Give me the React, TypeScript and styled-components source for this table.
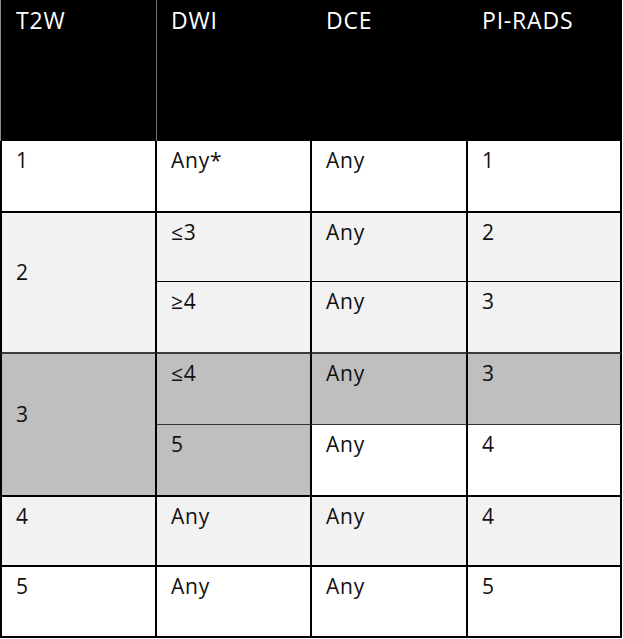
import styled, { createGlobalStyle } from 'styled-components';

const GlobalStyle = createGlobalStyle`
    html, body {
        margin: 0;
        padding: 0;
        background: #ffffff;
    }
`;

type RowProps = {
    $h: number;
};

type CellProps = {
    $bg?: string;
    $first?: boolean;
    $bottom?: string;
    $middle?: boolean;
};

type HeadCellProps = {
    $first?: boolean;
    $w: number;
};

const Table = styled.table`
    width: 622px;
    table-layout: fixed;
    border-collapse: separate;
    border-spacing: 0;
    font-family: "Open Sans", "Liberation Sans", sans-serif;
    color: #111111;
`;

const Row = styled.tr<RowProps>`
    height: ${(props) => props.$h}px;
`;

const HeadCell = styled.th<HeadCellProps>`
    box-sizing: border-box;
    width: ${(props) => props.$w}px;
    background: #000000;
    color: #ffffff;
    font-weight: 400;
    font-size: 23px;
    letter-spacing: 0.8px;
    line-height: normal;
    text-align: left;
    vertical-align: top;
    padding: 4px 0 0 ${(props) => (props.$first ? 15 : 14)}px;
    border-left: ${(props) => (props.$first ? '1px solid #8a8a8a' : 'none')};
    border-right: ${(props) => (props.$first ? '1px solid #6e6e6e' : 'none')};
`;

const Cell = styled.td<CellProps>`
    box-sizing: border-box;
    background: ${(props) => props.$bg || '#ffffff'};
    font-size: 21px;
    letter-spacing: 0.8px;
    line-height: normal;
    text-align: left;
    vertical-align: ${(props) => (props.$middle ? 'middle' : 'top')};
    padding: ${(props) => (props.$middle ? '0 0 22px 14px' : '5px 0 0 14px')};
    border-left: ${(props) => (props.$first ? '2px solid #000' : 'none')};
    border-right: 2px solid #000;
    border-bottom: ${(props) => props.$bottom || '2px solid #000'};
`;

const LIGHT = '#f2f2f2';
const DARK = '#bfbfbf';
const THIN = '1px solid #000';
const GROUP = '2px solid #3a3a3a';
const THIN_DARK = '1px solid #333';

const App = () => {
    return (
        <>
            <GlobalStyle />
            <Table>
                <thead>
                    <Row $h={141}>
                        <HeadCell $first $w={157}>T2W</HeadCell>
                        <HeadCell $w={155}>DWI</HeadCell>
                        <HeadCell $w={156}>DCE</HeadCell>
                        <HeadCell $w={154}>PI-RADS</HeadCell>
                    </Row>
                </thead>
                <tbody>
                    <Row $h={72}>
                        <Cell $first>1</Cell>
                        <Cell>Any*</Cell>
                        <Cell>Any</Cell>
                        <Cell>1</Cell>
                    </Row>
                    <Row $h={69}>
                        <Cell $first $middle rowSpan={2} $bg={LIGHT} $bottom={GROUP}>2</Cell>
                        <Cell $bg={LIGHT} $bottom={THIN}>≤3</Cell>
                        <Cell $bg={LIGHT} $bottom={THIN}>Any</Cell>
                        <Cell $bg={LIGHT} $bottom={THIN}>2</Cell>
                    </Row>
                    <Row $h={72}>
                        <Cell $bg={LIGHT} $bottom={GROUP}>≥4</Cell>
                        <Cell $bg={LIGHT} $bottom={GROUP}>Any</Cell>
                        <Cell $bg={LIGHT} $bottom={GROUP}>3</Cell>
                    </Row>
                    <Row $h={71}>
                        <Cell $first $middle rowSpan={2} $bg={DARK}>3</Cell>
                        <Cell $bg={DARK} $bottom={THIN_DARK}>≤4</Cell>
                        <Cell $bg={DARK} $bottom={THIN_DARK}>Any</Cell>
                        <Cell $bg={DARK} $bottom={THIN_DARK}>3</Cell>
                    </Row>
                    <Row $h={72}>
                        <Cell $bg={DARK}>5</Cell>
                        <Cell>Any</Cell>
                        <Cell>4</Cell>
                    </Row>
                    <Row $h={70}>
                        <Cell $first $bg={LIGHT}>4</Cell>
                        <Cell $bg={LIGHT}>Any</Cell>
                        <Cell $bg={LIGHT}>Any</Cell>
                        <Cell $bg={LIGHT}>4</Cell>
                    </Row>
                    <Row $h={71}>
                        <Cell $first>5</Cell>
                        <Cell>Any</Cell>
                        <Cell>Any</Cell>
                        <Cell>5</Cell>
                    </Row>
                </tbody>
            </Table>
        </>
    );
};

export default App;
